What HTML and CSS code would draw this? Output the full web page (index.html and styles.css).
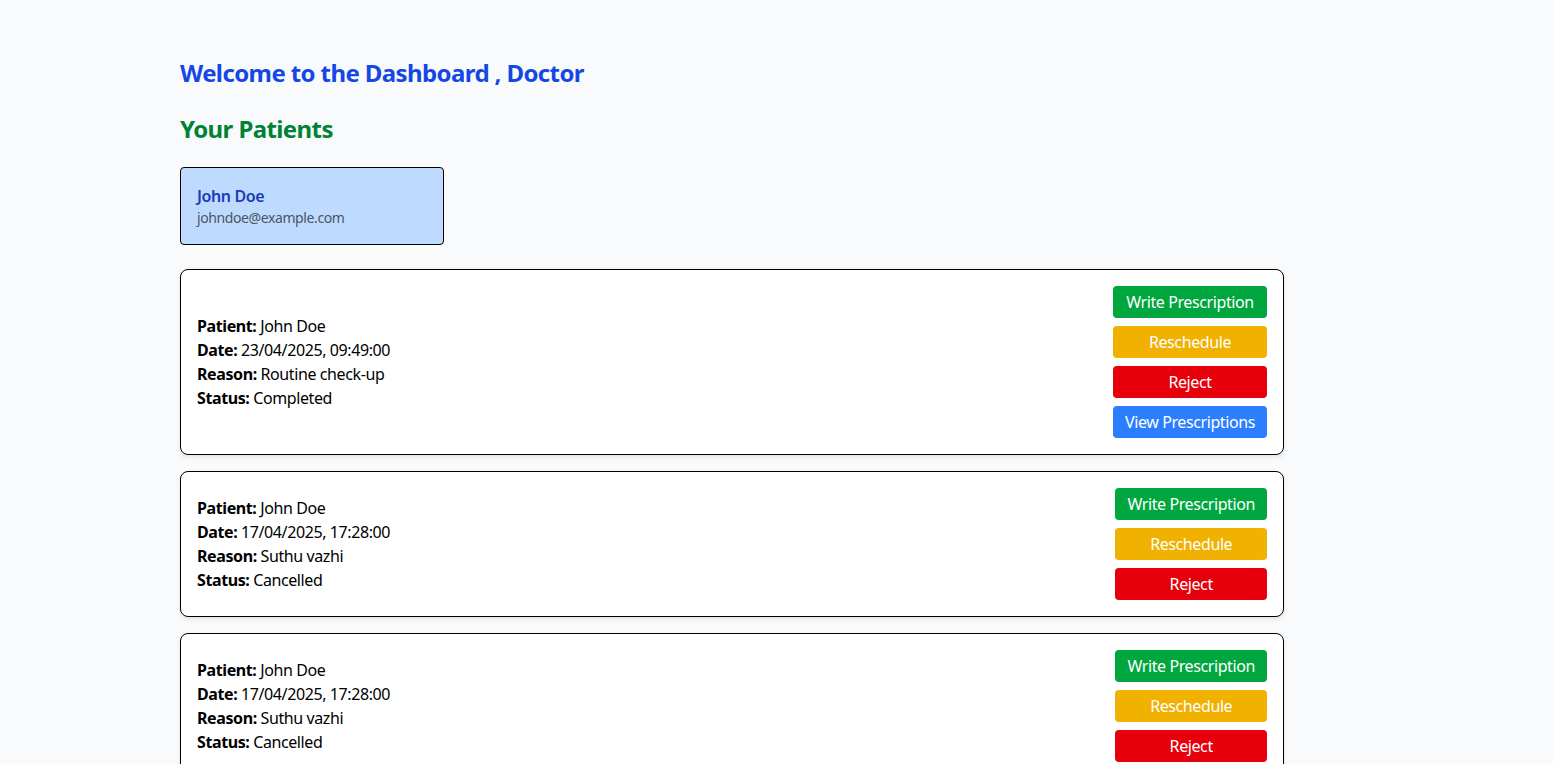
FILE: index.html
```html
<!DOCTYPE html>
<html lang="en">
<head>
<meta charset="utf-8">
<title>Doctor Dashboard</title>
<link rel="stylesheet" href="styles.css">
</head>
<body>
<main class="page">
  <h1 class="title">Welcome to the Dashboard , Doctor</h1>
  <h2 class="subtitle">Your Patients</h2>
  <div class="patients">
    <div class="patient-card">
      <div class="patient-name">John Doe</div>
      <div class="patient-email">johndoe@example.com</div>
    </div>
  </div>
  <div class="appointments">
    <div class="appt">
      <div class="appt-info">
        <p><b>Patient:</b> John Doe</p>
        <p><b>Date:</b> 23/04/2025, 09:49:00</p>
        <p><b>Reason:</b> Routine check-up</p>
        <p><b>Status:</b> Completed</p>
      </div>
      <div class="appt-actions">
        <button class="btn btn-green">Write Prescription</button>
        <button class="btn btn-yellow">Reschedule</button>
        <button class="btn btn-red">Reject</button>
        <button class="btn btn-blue">View Prescriptions</button>
      </div>
    </div>
    <div class="appt">
      <div class="appt-info">
        <p><b>Patient:</b> John Doe</p>
        <p><b>Date:</b> 17/04/2025, 17:28:00</p>
        <p><b>Reason:</b> Suthu vazhi</p>
        <p><b>Status:</b> Cancelled</p>
      </div>
      <div class="appt-actions">
        <button class="btn btn-green">Write Prescription</button>
        <button class="btn btn-yellow">Reschedule</button>
        <button class="btn btn-red">Reject</button>
      </div>
    </div>
    <div class="appt">
      <div class="appt-info">
        <p><b>Patient:</b> John Doe</p>
        <p><b>Date:</b> 17/04/2025, 17:28:00</p>
        <p><b>Reason:</b> Suthu vazhi</p>
        <p><b>Status:</b> Cancelled</p>
      </div>
      <div class="appt-actions">
        <button class="btn btn-green">Write Prescription</button>
        <button class="btn btn-yellow">Reschedule</button>
        <button class="btn btn-red">Reject</button>
      </div>
    </div>
  </div>
</main>
</body>
</html>
```
FILE: styles.css
```css
* { box-sizing: border-box; }
html, body { margin: 0; padding: 0; }
body {
  background: #f9fafb;
  font-family: "Noto Sans", "Open Sans", sans-serif;
  color: #000;
  letter-spacing: -0.4px;
}
.page {
  width: 1104px;
  margin-left: 180px;
  padding-top: 57px;
}
.title {
  margin: 0 0 24px;
  font-size: 24px;
  line-height: 32px;
  font-weight: 700;
  color: #1447e6;
  letter-spacing: -0.6px;
}
.subtitle {
  margin: 0 0 22px;
  font-size: 24px;
  line-height: 32px;
  font-weight: 700;
  color: #008236;
  letter-spacing: -0.6px;
}
.patients {
  display: flex;
  margin-bottom: 24px;
}
.patient-card {
  width: 264px;
  background: #bedbff;
  border: 1px solid #000;
  border-radius: 4px;
  padding: 16px;
}
.patient-name {
  font-size: 16px;
  line-height: 24px;
  font-weight: 600;
  color: #193cb8;
}
.patient-email {
  font-size: 14px;
  line-height: 20px;
  color: #4a5565;
}
.appointments {
  display: flex;
  flex-direction: column;
  gap: 16px;
}
.appt {
  display: flex;
  justify-content: space-between;
  align-items: center;
  background: #fff;
  border: 1px solid #000;
  border-radius: 8px;
  padding: 16px;
  box-shadow: 0 2px 4px rgba(0,0,0,0.1);
}
.appt-info p {
  margin: 0;
  font-size: 16px;
  line-height: 24px;
}
.appt-info b { font-weight: 700; }
.appt-actions {
  display: flex;
  flex-direction: column;
  gap: 8px;
}
.btn {
  font-family: inherit;
  letter-spacing: inherit;
  font-size: 16px;
  line-height: 24px;
  height: 32px;
  padding: 4px 12px;
  border: none;
  border-radius: 4px;
  color: #fff;
  cursor: pointer;
}
.btn-green { background: #00a63e; }
.btn-yellow { background: #f0b100; }
.btn-red { background: #e7000b; }
.btn-blue { background: #2b7fff; }
```
